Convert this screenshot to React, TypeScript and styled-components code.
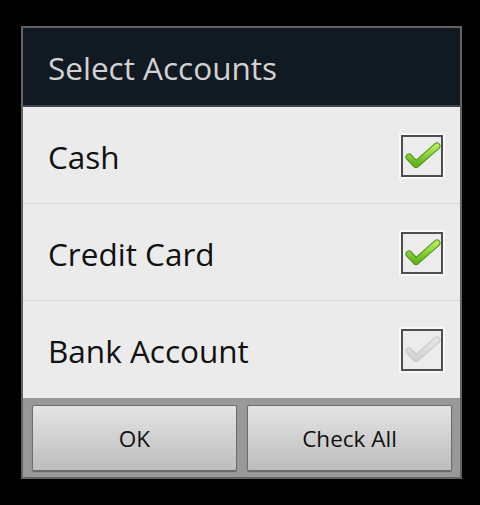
import React from "react";
import styled, { createGlobalStyle } from "styled-components";

const Global = createGlobalStyle`
  html, body { margin: 0; padding: 0; background: #000; }
  body { width: 480px; height: 505px; overflow: hidden; font-family: "Open Sans", "Noto Sans", sans-serif; }
`;

const Screen = styled.div`
  width: 480px;
  height: 505px;
  padding: 26px 0 0 21px;
  box-sizing: border-box;
  background: #000;
`;

const Dialog = styled.div`
  width: 441px;
  height: 453px;
  box-sizing: border-box;
  border: 2px solid #636363;
  display: flex;
  flex-direction: column;
  background: #ebebeb;
`;

const TitleBar = styled.div`
  height: 79px;
  background: #111a23;
  border-bottom: 2px solid #3a454f;
  display: flex;
  align-items: center;
  padding: 2px 0 0 25px;
  box-sizing: border-box;
  color: #d2d2d2;
  font-size: 31.5px;
  flex: none;
`;

const List = styled.div`
  display: flex;
  flex-direction: column;
  flex: none;
`;

const Row = styled.div<{ $last?: boolean }>`
  height: ${(p) => (p.$last ? 97 : 96)}px;
  border-bottom: ${(p) => (p.$last ? "none" : "1px solid #d6d6d6")};
  display: flex;
  align-items: center;
  justify-content: space-between;
  padding: 0 17px 0 25px;
  color: #111;
  font-size: 31.5px;
`;

const Label = styled.span`
  padding-top: 2px;
`;

const Box = styled.div`
  width: 42px;
  height: 42px;
  box-sizing: border-box;
  border: 2px solid #4e4e4e;
  background: #ececec;
  box-shadow: 0 0 0 2px #f8f8f8;
  display: flex;
  align-items: center;
  justify-content: center;
  margin-top: 1px;
`;

const ButtonBar = styled.div`
  flex: 1;
  background: #999;
  display: flex;
  gap: 10px;
  padding: 7px 8px 0 9px;
  box-sizing: border-box;
`;

const Button = styled.button`
  flex: 1;
  height: 66px;
  border: 1px solid #6d6d6d;
  border-radius: 2px;
  background: linear-gradient(#e4e4e4, #bdbdbd);
  box-shadow: 0 1px 1px rgba(0, 0, 0, 0.35);
  font-family: "Open Sans", "Noto Sans", sans-serif;
  font-size: 22.5px;
  color: #111;
  padding: 0;
`;

const CHECK = "M6 20 L13 27.5 L34 9";

function Check({ on }: { on: boolean }) {
  const id = on ? "gon" : "goff";
  return (
    <svg width="38" height="38" viewBox="0 0 38 38">
      <defs>
        <linearGradient id={id} x1="0" y1="0" x2="0" y2="1">
          <stop offset="0" stopColor={on ? "#b4ec5a" : "#e4e4e4"} />
          <stop offset="1" stopColor={on ? "#62b41e" : "#d2d2d2"} />
        </linearGradient>
      </defs>
      <path
        d={CHECK}
        fill="none"
        stroke={on ? "#4f8f1d" : "#c8c8c8"}
        strokeWidth="7"
        strokeLinecap="round"
        strokeLinejoin="round"
      />
      <path
        d={CHECK}
        fill="none"
        stroke={`url(#${id})`}
        strokeWidth="5"
        strokeLinecap="round"
        strokeLinejoin="round"
      />
    </svg>
  );
}

const accounts = [
  { name: "Cash", on: true },
  { name: "Credit Card", on: true },
  { name: "Bank Account", on: false },
];

export default function App() {
  return (
    <Screen>
      <Global />
      <Dialog>
        <TitleBar>Select Accounts</TitleBar>
        <List>
          {accounts.map((a, i) => (
            <Row key={a.name} $last={i === accounts.length - 1}>
              <Label>{a.name}</Label>
              <Box>
                <Check on={a.on} />
              </Box>
            </Row>
          ))}
        </List>
        <ButtonBar>
          <Button>OK</Button>
          <Button>Check All</Button>
        </ButtonBar>
      </Dialog>
    </Screen>
  );
}
